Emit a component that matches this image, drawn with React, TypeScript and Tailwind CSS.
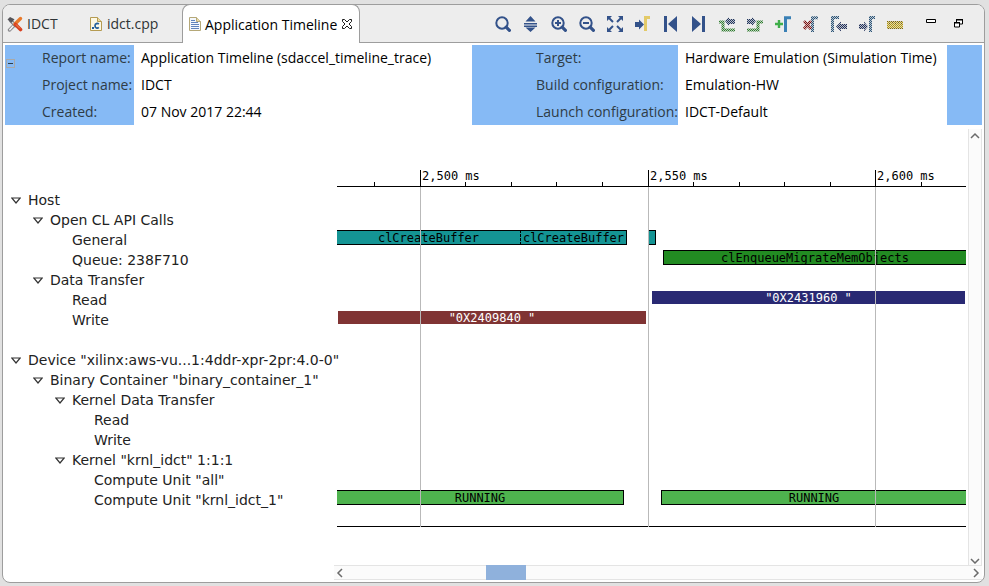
import React from "react";

const NAVY = "#33528a";
const UI_FONT = "font-['Open_Sans','Noto_Sans',sans-serif]";
const TREE_FONT = "font-['DejaVu_Sans',sans-serif]";
const MONO_FONT = "font-['DejaVu_Sans_Mono',monospace]";

/* ---------- toolbar icons ---------- */

function Icon({ children, dim = false }: { children: React.ReactNode; dim?: boolean }) {
  const id = React.useId();
  return (
    <svg width="16" height="16" viewBox="0 0 16 16" className="block" aria-hidden="true">
      {children}
      {dim && (
        <>
          <defs>
            <pattern id={id} width="2" height="2" patternUnits="userSpaceOnUse">
              <rect width="1" height="1" fill="#ededed" />
              <rect x="1" y="1" width="1" height="1" fill="#ededed" />
            </pattern>
          </defs>
          <rect width="16" height="16" fill={`url(#${id})`} opacity="0.75" />
        </>
      )}
    </svg>
  );
}

function Lens({ mark }: { mark?: "plus" | "minus" }) {
  return (
    <>
      <circle cx="7" cy="7" r="5.7" fill="none" stroke={NAVY} strokeWidth="2" />
      <path d="M11.2 11.2 14.4 14.4" stroke={NAVY} strokeWidth="3.2" strokeLinecap="round" />
      {mark && <rect x="4" y="6" width="6" height="2" fill={NAVY} />}
      {mark === "plus" && <rect x="6" y="4" width="2" height="6" fill={NAVY} />}
    </>
  );
}

const tools: { name: string; dim?: boolean; art: React.ReactNode }[] = [
  { name: "Zoom", art: <Lens /> },
  {
    name: "Fit vertically",
    art: <path d="M7.5 0 12.5 5.500H2.500ZM1 7h13v1.600H1ZM1 9.400h13V11H1ZM7.500 16 12.500 11.600H2.500Z" fill={NAVY} />,
  },
  { name: "Zoom in", art: <Lens mark="plus" /> },
  { name: "Zoom out", art: <Lens mark="minus" /> },
  {
    name: "Zoom to fit",
    art: (
      <>
        <path d="M0 0h5L0 5ZM16 0h-5l5 5ZM0 16h5l-5-5ZM16 16h-5l5-5Z" fill={NAVY} />
        <path d="m1 1 5 5M15 1l-5 5M1 15l5-5M15 15l-5-5" stroke={NAVY} strokeWidth="2" />
      </>
    ),
  },
  {
    name: "Go to cursor",
    art: (
      <>
        <path d="M0 6h4V3.500L9 8.500 4 13.500V11H0Z" fill={NAVY} />
        <path d="M10.500 15V1.500H15" fill="none" stroke="#e3ca68" strokeWidth="3" />
      </>
    ),
  },
  { name: "Previous event", art: <path d="M1 0h3v16H1ZM14 0v16L5 8Z" fill={NAVY} /> },
  { name: "Next event", art: <path d="M14 0h-3v16h3ZM1 0v16l9-8Z" fill={NAVY} /> },
  {
    name: "Previous transition",
    dim: true,
    art: (
      <>
        <path d="M6 5 10 1v2h6v5h-6v2Z" fill="#22365e" />
        <path d="M0 6h4v8h12" fill="none" stroke="#2f7d2f" strokeWidth="3" />
      </>
    ),
  },
  {
    name: "Next transition",
    dim: true,
    art: (
      <>
        <path d="M9 5 5 1v2H0v5h5v2Z" fill="#22365e" />
        <path d="M0 14h11V6h5" fill="none" stroke="#2f7d2f" strokeWidth="3" />
      </>
    ),
  },
  {
    name: "Add marker",
    art: (
      <>
        <path d="M0 8h8M4 4v8" stroke="#3fae49" strokeWidth="2.400" />
        <path d="M10.500 16V1.800H16" fill="none" stroke="#3a80b5" strokeWidth="3" />
      </>
    ),
  },
  {
    name: "Delete marker",
    dim: true,
    art: (
      <>
        <path d="M9.500 16V1.800H15" fill="none" stroke="#2c5578" strokeWidth="3" />
        <path d="m1 5 7 8M8 5l-7 8" stroke="#7d1010" strokeWidth="3" />
      </>
    ),
  },
  {
    name: "Previous marker",
    dim: true,
    art: (
      <>
        <path d="M1.500 16V1.500H8" fill="none" stroke="#2c5578" strokeWidth="3" />
        <path d="M5 10.500 10 5.500V8h6v5h-6v2.500Z" fill="#22305a" />
      </>
    ),
  },
  {
    name: "Next marker",
    dim: true,
    art: (
      <>
        <path d="M11.500 16V1.500H16" fill="none" stroke="#2c5578" strokeWidth="3" />
        <path d="M9 10.500 5 5.500V8H0v5h5v2.500Z" fill="#22305a" />
      </>
    ),
  },
  {
    name: "Ruler",
    dim: true,
    art: (
      <>
        <rect y="5" width="16" height="8" fill="#b59a10" />
        <path d="M0 5.500h16M0 12.500h16M2.500 5v4M5.500 5v3M8.500 5v4M11.500 5v3M14.500 5v4" stroke="#806808" />
      </>
    ),
  },
];

/* ---------- tab icons ---------- */

function ToolsIcon() {
  return (
    <svg width="16" height="16" viewBox="0 0 16 16" aria-hidden="true">
      <path d="M8 8.500 2.500 14" stroke="#8b8b8e" strokeWidth="3.400" strokeLinecap="round" />
      <path d="M7.500 8.500 2.800 13.700" stroke="#f2f2f2" strokeWidth="1.600" strokeLinecap="round" />
      <path d="m3.500 4.500 5 5" stroke="#77777a" strokeWidth="3.400" strokeLinecap="round" />
      <path d="m3.500 4.500 5 5" stroke="#d8d8d8" strokeWidth="1.400" />
      <path d="M.5 3.500 3 1l4.500 2.200-3 3.500Z" fill="#55555a" />
      <path d="M13.500 2.500 8 8" stroke="#e8792a" strokeWidth="3.400" strokeLinecap="round" />
      <path d="m8.500 8.500 5 5" stroke="#d8401f" strokeWidth="3.600" strokeLinecap="round" />
      <path d="m9 8.500 4 4" stroke="#f0905a" strokeWidth="1" />
    </svg>
  );
}

function CFileIcon() {
  return (
    <svg width="12" height="14" viewBox="0 0 12 14" aria-hidden="true">
      <path d="M.5.5h7l4 4v9H.5Z" fill="#fdf8e4" stroke="#b59b52" />
      <path d="M7.500.5v4h4" fill="#ead9a0" stroke="#b59b52" />
      <path d="M8.800 7.200C7.500 5.800 5 6.500 5 8.800s2.500 3 3.800 1.600" fill="none" stroke="#245f9c" strokeWidth="1.700" />
      <rect x="2" y="10" width="2" height="2" fill="#245f9c" />
    </svg>
  );
}

function ReportIcon() {
  return (
    <svg width="12" height="14" viewBox="0 0 12 14" aria-hidden="true">
      <path d="M.5.5h7l4 4v9H.5Z" fill="#f3f7fd" stroke="#b5a878" />
      <path d="M7.500.5v4h4" fill="#e7d9a8" stroke="#b5a878" />
      <path d="M2 3.500h4M2 5.500h7M2 7.500h8M2 9.500h8M2 11.500h8" stroke="#5f83bd" />
    </svg>
  );
}

/* ---------- tree ---------- */

type Node = { label: string; children?: Node[] };

const tree: Node[] = [
  {
    label: "Host",
    children: [
      { label: "Open CL API Calls", children: [{ label: "General" }, { label: "Queue: 238F710" }] },
      { label: "Data Transfer", children: [{ label: "Read" }, { label: "Write" }] },
    ],
  },
  {
    label: 'Device "xilinx:aws-vu...1:4ddr-xpr-2pr:4.0-0"',
    children: [
      {
        label: 'Binary Container "binary_container_1"',
        children: [
          { label: "Kernel Data Transfer", children: [{ label: "Read" }, { label: "Write" }] },
          {
            label: 'Kernel "krnl_idct" 1:1:1',
            children: [{ label: 'Compute Unit "all"' }, { label: 'Compute Unit "krnl_idct_1"' }],
          },
        ],
      },
    ],
  },
];

function Branch({ node }: { node: Node }) {
  return (
    <li>
      <div className="flex h-5 items-center whitespace-nowrap">
        <span className="flex w-[17px] shrink-0 items-center">
          {node.children && (
            <button type="button" aria-label={`Collapse ${node.label}`} className="block">
              <svg width="10" height="7" viewBox="0 0 10 7" className="block" aria-hidden="true">
                <path d="M.8 1h8.400L5 6Z" fill="#fff" stroke="#333" strokeWidth="1.200" />
              </svg>
            </button>
          )}
        </span>
        {node.label}
      </div>
      {node.children && (
        <ul className="pl-[22px]">
          {node.children.map((c) => (
            <Branch key={c.label} node={c} />
          ))}
        </ul>
      )}
    </li>
  );
}

/* ---------- timeline ---------- */

/* Horizontal positions are in chart units, SPAN units across the visible range. */
const SPAN = 629;
const pct = (v: number) => `${(v / SPAN) * 100}%`;

const majors = [
  { at: 83, label: "2,500 ms" },
  { at: 311, label: "2,550 ms" },
  { at: 538, label: "2,600 ms" },
];
const minors = [37, 128, 174, 219, 265, 356, 402, 447, 493, 584];

type Bar = { from: number; to: number; label?: string; look: string };
const TEAL = "h-[15px] border-y border-black bg-[#149494] text-black";
const QUEUE = "h-[15px] border-y border-l border-black bg-[#228b22] text-black";
const RUN = "h-[15px] border-y border-black bg-[#4eb34e] text-black";

const lanes: Bar[][] = [
  [],
  [],
  [
    { from: 0, to: 183, label: "clCreateBuffer", look: TEAL },
    { from: 183, to: 290, label: "clCreateBuffer", look: `${TEAL} border-x [border-left-style:dashed]` },
    { from: 312, to: 319, look: `${TEAL} border-r` },
  ],
  [{ from: 326, to: 629, label: "clEnqueueMigrateMemObjects", look: QUEUE }],
  [],
  [{ from: 315, to: 628, label: '"0X2431960 "', look: "mt-px h-[13px] bg-[#292973] text-white" }],
  [{ from: 1, to: 309, label: '"0X2409840 "', look: "mt-px h-[13px] bg-[#803434] text-white" }],
  [],
  [],
  [],
  [],
  [],
  [],
  [],
  [],
  [
    { from: 0, to: 287, label: "RUNNING", look: `${RUN} border-r` },
    { from: 324, to: 629, label: "RUNNING", look: `${RUN} border-l` },
  ],
];

function Timeline() {
  return (
    <div className={`relative mt-[41px] min-w-0 flex-1 self-start overflow-hidden text-[12px] leading-[12px] ${MONO_FONT}`}>
      <div className="relative h-[17px] border-b border-black">
        {minors.map((m) => (
          <span key={m} className="absolute bottom-0 h-1 w-px bg-black" style={{ left: pct(m) }} />
        ))}
        {majors.map((m) => (
          <span
            key={m.at}
            className="absolute top-0 h-4 border-l border-black pl-px whitespace-nowrap"
            style={{ left: pct(m.at) }}
          >
            {m.label}
          </span>
        ))}
      </div>
      <div className="relative border-b border-black pt-[3px] pb-4">
        {lanes.map((bars, i) => (
          <div key={i} className="relative h-5">
            {bars.map((b) => (
              <div
                key={b.from}
                className={`absolute top-0 flex items-center justify-center overflow-hidden whitespace-pre ${b.look}`}
                style={{ left: pct(b.from), width: pct(b.to - b.from) }}
              >
                {b.label}
              </div>
            ))}
          </div>
        ))}
        {majors.map((m) => (
          <span key={m.at} className="absolute top-0 -bottom-px w-px bg-[#b9b9b9]" style={{ left: pct(m.at) }} />
        ))}
      </div>
    </div>
  );
}

function Chevron({ d, label }: { d: string; label: string }) {
  return (
    <button type="button" aria-label={label} className="flex size-3 items-center justify-center">
      <svg width="10" height="10" viewBox="0 0 10 10" aria-hidden="true">
        <path d={d} fill="none" stroke="#6b6b6b" strokeWidth="1.500" />
      </svg>
    </button>
  );
}

function Field({ items }: { items: string[] }) {
  return (
    <>
      {items.map((t) => (
        <div key={t} className="h-[26px] leading-[26px] whitespace-nowrap">
          {t}
        </div>
      ))}
    </>
  );
}

export default function App() {
  return (
    <div className={`flex min-h-screen flex-col bg-[#e1e1e1] pt-1 pr-1 pb-[3px] pl-0.5 text-black ${UI_FONT}`}>
      <main className="flex flex-1 flex-col overflow-hidden rounded-lg border border-[#9d9d9d] bg-white">
        <header className="flex h-[38px] items-stretch bg-[#ededed]">
          <div role="tablist" className="flex text-[14px] text-[#2f3436]">
            <button type="button" role="tab" className="flex w-[76px] items-center gap-1 border-b border-[#9d9d9d] pl-1">
              <ToolsIcon />
              IDCT
            </button>
            <button type="button" role="tab" className="flex w-[103px] items-center gap-[5px] border-b border-[#9d9d9d] pl-[11px]">
              <CFileIcon />
              idct.cpp
            </button>
            <button
              type="button"
              role="tab"
              aria-selected="true"
              className="-mt-px flex w-[178px] items-center gap-1 rounded-t-lg border border-b-0 border-[#9d9d9d] bg-white pl-1.5 whitespace-nowrap text-black"
            >
              <ReportIcon />
              Application Timeline
              <svg width="12" height="12" viewBox="0 0 12 12" className="shrink-0" aria-hidden="true">
                <path
                  d="M1.500 1.500h2L6 4l2.500-2.500h2v2L8 6l2.500 2.500v2h-2L6 8l-2.500 2.500h-2v-2L4 6 1.500 3.500Z"
                  fill="#fff"
                  stroke="#1c1c1c"
                />
              </svg>
            </button>
          </div>
          <div className="flex flex-1 items-center justify-end border-b border-[#9d9d9d] pr-[21px]">
            <div role="toolbar" className="flex gap-3">
              {tools.map((t) => (
                <button key={t.name} type="button" aria-label={t.name} disabled={t.dim}>
                  <Icon dim={t.dim}>{t.art}</Icon>
                </button>
              ))}
            </div>
            <button type="button" aria-label="Minimize" className="ml-[23px]">
              <svg width="10" height="12" viewBox="0 0 10 12" aria-hidden="true">
                <path d="M.5 1.500h9v3h-9Z" fill="#fff" stroke="#000" />
              </svg>
            </button>
            <button type="button" aria-label="Restore" className="ml-[18px]">
              <svg width="9" height="9" viewBox="0 0 9 9" aria-hidden="true">
                <path d="M2.500 1h6v4h-6Z" fill="#fff" stroke="#000" />
                <path d="M2 .5h7" stroke="#000" />
                <path d="M.5 4h5v4h-5Z" fill="#fff" stroke="#000" />
                <path d="M0 3.500h6" stroke="#000" />
              </svg>
            </button>
          </div>
        </header>

        <section className="mx-0.5 mt-0.5 grid grid-cols-[129px_338fr_206px_269fr_35px] text-[14px]">
          <div className="flex gap-[27px] bg-[#86baf5] pl-px text-[#2f3c46]">
            <button
              type="button"
              aria-label="Collapse report details"
              className="mt-3.5 flex size-[9px] items-center justify-center border border-[#a9a9a9]"
            >
              <span className="h-px w-[5px] bg-[#2f3c46]" />
            </button>
            <div className="grid gap-px">
              <Field items={["Report name:", "Project name:", "Created:"]} />
            </div>
          </div>
          <div className="grid gap-px pl-[7px]">
            <Field items={["Application Timeline (sdaccel_timeline_trace)", "IDCT", "07 Nov 2017 22:44"]} />
          </div>
          <div className="grid gap-px bg-[#86baf5] pl-16 text-[#2f3c46]">
            <Field items={["Target:", "Build configuration:", "Launch configuration:"]} />
          </div>
          <div className="grid gap-px pl-[7px]">
            <Field items={["Hardware Emulation (Simulation Time)", "Emulation-HW", "IDCT-Default"]} />
          </div>
          <div className="bg-[#86baf5]" />
        </section>

        <section className="mt-1 mr-0.5 mb-0.5 flex flex-1">
          <div className={`w-[331px] shrink-0 pt-[61px] pl-2 text-[14px] text-[#222] ${TREE_FONT}`}>
            <ul className="space-y-5">
              {tree.map((n) => (
                <Branch key={n.label} node={n} />
              ))}
            </ul>
          </div>
          <div className="flex min-w-0 flex-1 flex-col">
            <div className="flex flex-1 gap-0.5 pl-[3px]">
              <Timeline />
              <div className="flex w-[14px] shrink-0 flex-col items-center justify-between border-x border-[#e4e4e4] bg-[#fbfbfb]">
                <Chevron d="M1 8 5 4l4 4" label="Scroll up" />
                <Chevron d="M1 5l4 4 4-4" label="Scroll down" />
              </div>
            </div>
            <div className="flex h-[15px] items-center border-y border-[#e4e4e4] bg-[#fbfbfb]">
              <Chevron d="M7 1 3 5l4 4" label="Scroll left" />
              <div className="flex h-full flex-1">
                <div className="h-full grow-[140]" />
                <div className="-my-px w-10 bg-[#8fb1dc]" />
                <div className="h-full grow-[444]" />
              </div>
              <Chevron d="M3 1l4 4-4 4" label="Scroll right" />
            </div>
          </div>
        </section>
      </main>
    </div>
  );
}
